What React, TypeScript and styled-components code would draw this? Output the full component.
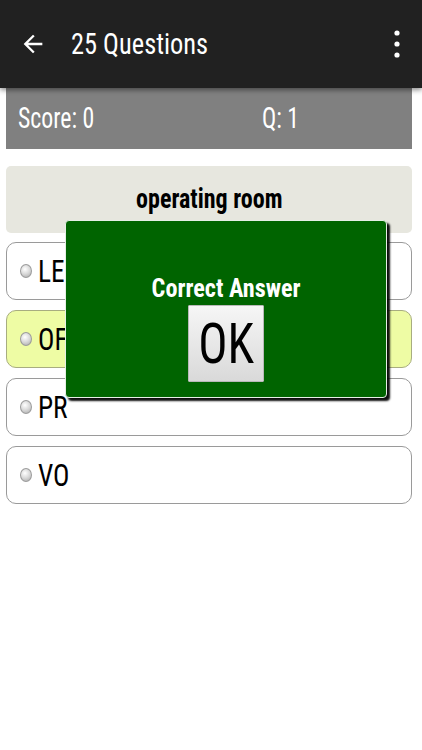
import styled, { createGlobalStyle, css } from 'styled-components';

// condensed look of the device font
const FONT = `"Roboto Condensed", "Liberation Sans Narrow", "DejaVu Sans Condensed", Roboto, sans-serif`;

// the screenshot is a little squeezed sideways, so text gets narrowed
const squeeze = (k: number, origin = 'left center') => css`
  display: inline-block;
  transform: scaleX(${k});
  transform-origin: ${origin};
`;

const GlobalStyle = createGlobalStyle`
  html, body {
    margin: 0;
    padding: 0;
    background: #ffffff;
  }
  body {
    font-family: ${FONT};
    width: 422px;
    height: 750px;
    overflow: hidden;
  }
`;

// ===== APP BAR =====

const Screen = styled.div`
  position: relative;
  width: 422px;
  height: 750px;
  background: #ffffff;
`;

const AppBar = styled.header`
  position: relative;
  z-index: 1;
  display: flex;
  align-items: center;
  height: 88px;
  padding: 0 21px 0 19px;
  background: #212121;
  box-shadow: 0 2px 5px rgba(0, 0, 0, 0.45);
  box-sizing: border-box;
`;

const BarIcon = styled.svg`
  display: block;
  flex-shrink: 0;
`;

const Title = styled.h1`
  margin: 0 0 0 24px;
  font-size: 30px;
  font-weight: 400;
  color: #ffffff;
  line-height: 1;
  ${squeeze(0.88)}
`;

const MenuButton = styled.div`
  margin-left: auto;
  display: flex;
`;

// ===== CONTENT =====

const Content = styled.main`
  display: flex;
  flex-direction: column;
  padding: 0 10px 0 6px;
`;

const ScoreBar = styled.div`
  display: grid;
  grid-template-columns: 244px 1fr;
  align-items: center;
  height: 61px;
  padding-left: 12px;
  background: #808080;
`;

const ScoreItem = styled.span`
  font-size: 29px;
  color: #ffffff;
  line-height: 1;
  justify-self: start;
  ${squeeze(0.82)}
`;

const QuestionBox = styled.div`
  display: flex;
  align-items: center;
  justify-content: center;
  height: 67px;
  margin-top: 17px;
  border-radius: 5px;
  background: #e7e7df;
`;

const QuestionText = styled.span`
  font-size: 27px;
  font-weight: 700;
  color: #000000;
  line-height: 1;
  ${squeeze(0.89, 'center center')}
`;

const OptionList = styled.div`
  display: flex;
  flex-direction: column;
  gap: 10px;
  margin-top: 9px;
`;

const Option = styled.div<{ $highlight?: boolean }>`
  display: flex;
  align-items: center;
  height: 58px;
  padding-left: 13px;
  border-radius: 10px;
  border: 1px solid ${(p) => (p.$highlight ? '#a8ad80' : '#9a9a9a')};
  background: ${(p) => (p.$highlight ? '#eefca4' : '#ffffff')};
  box-sizing: border-box;
`;

const Radio = styled.span`
  width: 12px;
  height: 14px;
  border-radius: 50%;
  border: 1px solid #9c9c9c;
  background: radial-gradient(circle at 40% 35%, #ffffff 0%, #d8d8d8 50%, #a8a8a8 100%);
  box-sizing: border-box;
  flex-shrink: 0;
`;

const OptionText = styled.span`
  margin-left: 6px;
  font-size: 31px;
  color: #000000;
  line-height: 1;
  ${squeeze(0.88)}
`;

// ===== DIALOG =====

const Dialog = styled.div`
  position: absolute;
  left: 65px;
  top: 220px;
  width: 322px;
  height: 178px;
  display: flex;
  flex-direction: column;
  align-items: center;
  padding-top: 52px;
  border-radius: 4px;
  border: 1px solid #e6efe6;
  background: #006400;
  box-shadow: 3px 3px 2px rgba(0, 0, 0, 0.95);
  box-sizing: border-box;
`;

const DialogText = styled.div`
  font-size: 26px;
  font-weight: 700;
  color: #ffffff;
  line-height: 30px;
  ${squeeze(0.93, 'center center')}
`;

const OkButton = styled.button`
  width: 76px;
  height: 77px;
  margin-top: 2px;
  padding: 0;
  border: 1px solid #b9b9b9;
  border-radius: 1px;
  background: linear-gradient(#f6f6f6, #d9d9d9);
  font-family: ${FONT};
  color: #000000;
  line-height: 1;
`;

const OkLabel = styled.span`
  font-size: 56px;
  ${squeeze(0.87, 'center center')}
`;

const options = [
  { label: 'LE' },
  { label: 'OF', highlight: true },
  { label: 'PR' },
  { label: 'VO' },
];

export default function App() {
  return (
    <Screen>
      <GlobalStyle />
      <AppBar>
        <BarIcon width="28" height="28" viewBox="0 0 24 24">
          <path fill="#ffffff" d="M20 11H7.83l5.59-5.59L12 4l-8 8 8 8 1.41-1.41L7.83 13H20v-2z" />
        </BarIcon>
        <Title>25 Questions</Title>
        <MenuButton>
          <BarIcon width="8" height="30" viewBox="0 0 8 30">
            <circle cx="4" cy="4" r="2.6" fill="#ffffff" />
            <circle cx="4" cy="15" r="2.6" fill="#ffffff" />
            <circle cx="4" cy="26" r="2.6" fill="#ffffff" />
          </BarIcon>
        </MenuButton>
      </AppBar>

      <Content>
        <ScoreBar>
          <ScoreItem>Score: 0</ScoreItem>
          <ScoreItem>Q: 1</ScoreItem>
        </ScoreBar>

        <QuestionBox>
          <QuestionText>operating room</QuestionText>
        </QuestionBox>

        <OptionList>
          {options.map((o) => (
            <Option key={o.label} $highlight={o.highlight}>
              <Radio />
              <OptionText>{o.label}</OptionText>
            </Option>
          ))}
        </OptionList>
      </Content>

      <Dialog>
        <DialogText>Correct Answer</DialogText>
        <OkButton>
          <OkLabel>OK</OkLabel>
        </OkButton>
      </Dialog>
    </Screen>
  );
}
